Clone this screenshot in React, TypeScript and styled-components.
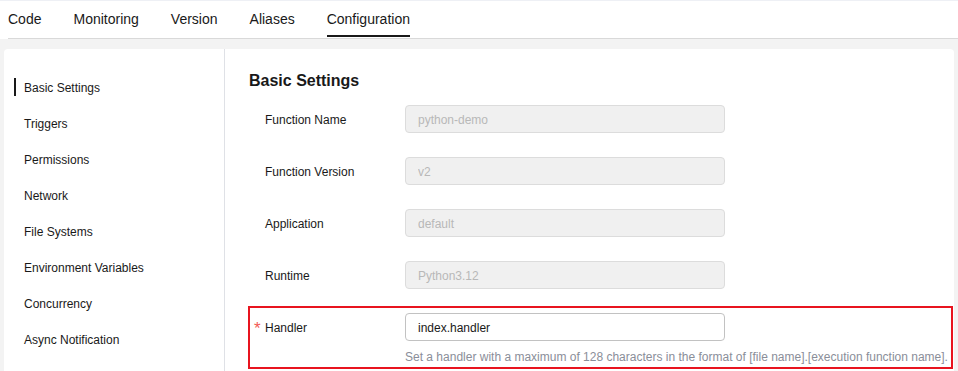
import styled, { createGlobalStyle } from 'styled-components';

const GlobalStyle = createGlobalStyle`
  html, body {
    margin: 0;
    padding: 0;
    background-color: #f3f3f3;
    font-family: 'Liberation Sans', Arial, sans-serif;
    color: #252b3a;
  }
  * {
    box-sizing: border-box;
  }
`;

const Page = styled.div`
  width: 958px;
  height: 371px;
  overflow: hidden;
  display: flex;
  flex-direction: column;
`;

const Header = styled.div`
  background-color: #fff;
  border-top: 1px solid #eef0f5;
  padding-left: 8px;
`;

const TabList = styled.nav`
  display: flex;
  gap: 32px;
  height: 38px;
  border-bottom: 1px solid #d9d9d9;
`;

const Tab = styled.div<{ active?: boolean }>`
  position: relative;
  height: 36px;
  display: flex;
  align-items: center;
  font-size: 14px;
  color: #191919;
  cursor: pointer;
  &::after {
    content: '';
    display: ${(props) => (props.active ? 'block' : 'none')};
    position: absolute;
    left: 0;
    right: 0;
    bottom: 0;
    height: 2px;
    background-color: #191919;
  }
`;

const Main = styled.div`
  flex: 1;
  padding: 10px 4px 0 4px;
  display: flex;
`;

const Card = styled.div`
  flex: 1;
  display: flex;
  background-color: #fff;
  border-radius: 4px 4px 0 0;
`;

const Sidebar = styled.aside`
  width: 221px;
  border-right: 1px solid #dfe1e6;
  padding-top: 21px;
`;

const SideItem = styled.div<{ active?: boolean }>`
  position: relative;
  height: 36px;
  display: flex;
  align-items: center;
  padding-left: 20px;
  font-size: 12px;
  color: #191919;
  cursor: pointer;
  &::before {
    content: '';
    display: ${(props) => (props.active ? 'block' : 'none')};
    position: absolute;
    left: 10px;
    top: 8px;
    width: 2px;
    height: 18px;
    background-color: #191919;
  }
`;

const Content = styled.section`
  flex: 1;
  padding: 20px 1px 0 23px;
`;

const Heading = styled.h2`
  margin: 0 0 5px 0;
  padding-left: 1px;
  font-size: 16px;
  line-height: 24px;
  font-weight: 700;
  color: #191919;
`;

const FormList = styled.div`
  display: flex;
  flex-direction: column;
  gap: 13px;
`;

const FormItem = styled.div<{ highlighted?: boolean }>`
  border: 2px solid ${(props) => (props.highlighted ? '#e8141f' : 'transparent')};
  padding: 5px 0 2px 15px;
`;

const Row = styled.div`
  display: flex;
  align-items: center;
`;

const Label = styled.label<{ required?: boolean }>`
  position: relative;
  width: 140px;
  padding-top: 2px;
  font-size: 12px;
  line-height: 26px;
  color: #191919;
  &::before {
    content: '*';
    display: ${(props) => (props.required ? 'block' : 'none')};
    position: absolute;
    left: -11px;
    top: 3px;
    color: #f25a55;
    font-size: 17px;
  }
`;

const Input = styled.input`
  width: 320px;
  height: 28px;
  padding: 1px 12px 0 12px;
  border: 1px solid #c2c2c2;
  border-radius: 4px;
  background-color: #fff;
  font-family: 'Liberation Sans', Arial, sans-serif;
  font-size: 12px;
  color: #191919;
  outline: none;
  &:disabled {
    background-color: #f0f0f0;
    border-color: #dcdcdc;
    color: #b8b8b8;
  }
`;

const Help = styled.div`
  margin: 9px 0 0 140px;
  font-size: 12px;
  line-height: 15px;
  color: #8a8e99;
  white-space: nowrap;
`;

const tabs = ['Code', 'Monitoring', 'Version', 'Aliases', 'Configuration'];

const menu = [
  'Basic Settings',
  'Triggers',
  'Permissions',
  'Network',
  'File Systems',
  'Environment Variables',
  'Concurrency',
  'Async Notification',
];

const fields = [
  { label: 'Function Name', value: 'python-demo' },
  { label: 'Function Version', value: 'v2' },
  { label: 'Application', value: 'default' },
  { label: 'Runtime', value: 'Python3.12' },
];

export default function App() {
  return (
    <Page>
      <GlobalStyle />
      <Header>
        <TabList>
          {tabs.map((tab) => (
            <Tab key={tab} active={tab === 'Configuration'}>
              {tab}
            </Tab>
          ))}
        </TabList>
      </Header>
      <Main>
        <Card>
          <Sidebar>
            {menu.map((item) => (
              <SideItem key={item} active={item === 'Basic Settings'}>
                {item}
              </SideItem>
            ))}
          </Sidebar>
          <Content>
            <Heading>Basic Settings</Heading>
            <FormList>
              {fields.map((field) => (
                <FormItem key={field.label}>
                  <Row>
                    <Label>{field.label}</Label>
                    <Input value={field.value} disabled readOnly />
                  </Row>
                </FormItem>
              ))}
              <FormItem highlighted>
                <Row>
                  <Label required>Handler</Label>
                  <Input defaultValue="index.handler" />
                </Row>
                <Help>
                  Set a handler with a maximum of 128 characters in the format of [file
                  name].[execution function name].
                </Help>
              </FormItem>
            </FormList>
          </Content>
        </Card>
      </Main>
    </Page>
  );
}
